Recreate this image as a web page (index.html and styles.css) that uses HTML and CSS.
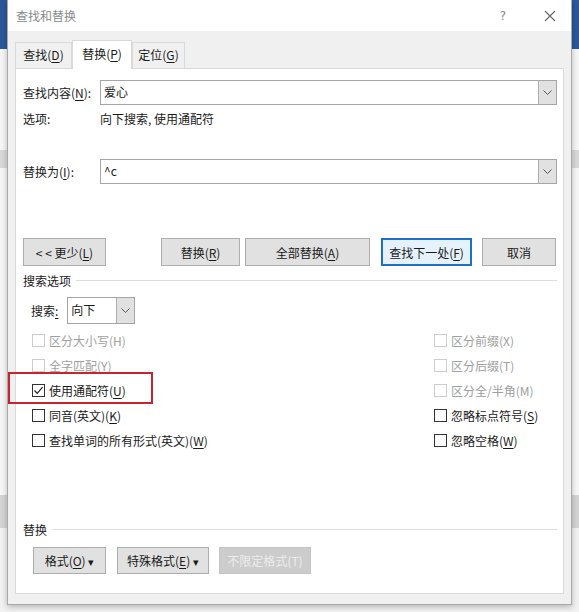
FILE: index.html
```html
<!DOCTYPE html>
<html lang="zh-CN">
<head>
  <meta charset="UTF-8" />
  <title>查找和替换</title>
  <link rel="stylesheet" href="styles.css">
</head>
<body>
  <div class="dialog">
    <div class="titlebar">
      <span class="title">查找和替换</span>
      <span class="help">?</span>
      <svg class="close" width="12" height="12" viewBox="0 0 12 12">
        <path d="M1 1L11 11M11 1L1 11" stroke="#666" stroke-width="1.1" fill="none"/>
      </svg>
    </div>

    <div class="tabs">
      <div class="tab t-find">查找(<u>D</u>)</div>
      <div class="tab t-replace active">替换(<u>P</u>)</div>
      <div class="tab t-goto">定位(<u>G</u>)</div>
    </div>

    <div class="panel">
      <div class="field first">
        <span class="label">查找内容(<u>N</u>):</span>
        <div class="combo"><span class="value">爱心</span><span class="arrow"><svg width="9" height="5" viewBox="0 0 9 5"><path d="M0.5 0.5L4.5 4.5L8.5 0.5" stroke="#555" fill="none"/></svg></span></div>
      </div>
      <div class="field options">
        <span class="label">选项:</span>
        <span>向下搜索, 使用通配符</span>
      </div>
      <div class="field second">
        <span class="label">替换为(<u>I</u>):</span>
        <div class="combo"><span class="value">^c</span><span class="arrow"><svg width="9" height="5" viewBox="0 0 9 5"><path d="M0.5 0.5L4.5 4.5L8.5 0.5" stroke="#555" fill="none"/></svg></span></div>
      </div>

      <div class="actions">
        <button class="btn b-less">&lt; &lt; 更少(<u>L</u>)</button>
        <div class="action-group">
          <button class="btn b-replace">替换(<u>R</u>)</button>
          <button class="btn b-all">全部替换(<u>A</u>)</button>
          <button class="btn b-next default">查找下一处(<u>F</u>)</button>
          <button class="btn b-cancel">取消</button>
        </div>
      </div>

      <div class="section">
        <span>搜索选项</span>
        <span class="rule"></span>
      </div>

      <div class="search-row">
        <span>搜索<u>:</u></span>
        <div class="combo small"><span class="value">向下</span><span class="arrow"><svg width="9" height="5" viewBox="0 0 9 5"><path d="M0.5 0.5L4.5 4.5L8.5 0.5" stroke="#555" fill="none"/></svg></span></div>
      </div>

      <div class="checks">
        <label class="check disabled"><span class="box"></span><span>区分大小写(H)</span></label>
        <label class="check disabled"><span class="box"></span><span>区分前缀(X)</span></label>
        <label class="check disabled"><span class="box"></span><span>全字匹配(Y)</span></label>
        <label class="check disabled"><span class="box"></span><span>区分后缀(T)</span></label>
        <label class="check"><span class="box"><svg width="11" height="11" viewBox="0 0 11 11"><path d="M1.5 5.5L4.2 8.3L9.6 2.2" stroke="#222" stroke-width="1.2" fill="none"/></svg></span><span>使用通配符(<u>U</u>)</span></label>
        <label class="check disabled"><span class="box"></span><span>区分全/半角(M)</span></label>
        <label class="check"><span class="box"></span><span>同音(英文)(<u>K</u>)</span></label>
        <label class="check"><span class="box"></span><span>忽略标点符号(<u>S</u>)</span></label>
        <label class="check"><span class="box"></span><span>查找单词的所有形式(英文)(<u>W</u>)</span></label>
        <label class="check"><span class="box"></span><span>忽略空格(<u>W</u>)</span></label>
      </div>

      <div class="section lower">
        <span>替换</span>
        <span class="rule"></span>
      </div>

      <div class="format-row">
        <button class="btn b-format">格式(<u>O</u>) <span class="caret">▾</span></button>
        <button class="btn b-special">特殊格式(<u>E</u>) <span class="caret">▾</span></button>
        <button class="btn b-noformat" disabled>不限定格式(T)</button>
      </div>
    </div>

    <div class="highlight"></div>
  </div>
</body>
</html>
```

FILE: styles.css
```css
body {
  margin: 0;
  height: 612px;
  overflow: hidden;
  font-family: "Noto Sans CJK SC", "Noto Sans", sans-serif;
  font-size: 12px;
  color: #1a1a1a;
  background: linear-gradient(#2b579a 0 49px, #f6f6f6 49px 150px, #d9d9d9 150px 168px, #f7f7f7 168px 495px, #d4d4d4 495px 528px, #f2f2f2 528px);
}
u { text-decoration: underline; text-underline-offset: 2px; }

.dialog {
  position: relative;
  box-sizing: border-box;
  width: 565px;
  height: 605px;
  margin-left: 7px;
  background: #f0f0f0;
  border: 1px solid #a9a9a9;
  border-top: none;
  box-shadow: 0 2px 6px rgba(0, 0, 0, 0.25);
  display: flex;
  flex-direction: column;
}

.titlebar {
  height: 31px;
  background: white;
  display: flex;
  align-items: center;
  padding-left: 8px;
}
.title { color: #8a8a8a; font-size: 12px; flex: 1; }
.help { color: #888; font-family: "DejaVu Sans", sans-serif; font-size: 12px; margin-right: 38px; }
.close { margin-right: 15px; }

.tabs {
  height: 37px;
  display: flex;
  align-items: flex-end;
  padding-left: 7px;
  position: relative;
  z-index: 1;
}
.tab {
  box-sizing: border-box;
  height: 26px;
  line-height: 24px;
  text-align: center;
  background: #f0f0f0;
  border: 1px solid #d9d9d9;
  border-bottom: none;
}
.t-find { width: 57px; }
.t-replace { width: 60px; }
.t-goto { width: 53px; }
.tab.active {
  height: 29px;
  line-height: 26px;
  background: white;
  margin-bottom: -1px;
  border-left: none;
  border-right: none;
  box-shadow: inset 1px 0 #d9d9d9, inset -1px 0 #d9d9d9;
}

.panel {
  box-sizing: border-box;
  height: 526px;
  margin: 0 7px;
  background: white;
  border: 1px solid #d9d9d9;
  padding: 0 6px 0 7px;
  display: flex;
  flex-direction: column;
}

.field {
  display: flex;
  align-items: center;
}
.field .label { width: 77px; flex: none; }
.field.first { margin-top: 11px; height: 25px; }
.field.options { margin-top: 3px; height: 20px; }
.field.second { margin-top: 31px; height: 25px; }

.combo {
  box-sizing: border-box;
  flex: 1;
  height: 25px;
  display: flex;
  border: 1px solid #a6a6a6;
  background: white;
}
.combo .value { flex: 1; padding-left: 3px; line-height: 21px; }
.combo .arrow {
  width: 17px;
  background: #e1e1e1;
  border-left: 1px solid #adadad;
  display: flex;
  align-items: center;
  justify-content: center;
}
.combo.small { flex: none; width: 68px; height: 27px; margin-left: 9px; }
.combo.small .value { line-height: 24px; }

.btn {
  box-sizing: border-box;
  height: 28px;
  padding: 0;
  font: inherit;
  color: #1a1a1a;
  background: #e1e1e1;
  border: 1px solid #adadad;
}
.btn.default { border: 2px solid #1f6fc5; background: #e5f1fb; }

.actions {
  margin-top: 54px;
  display: flex;
  justify-content: space-between;
  padding-right: 1px;
}
.b-less { width: 83px; }
.action-group { display: flex; }
.b-replace { width: 79px; }
.b-all { width: 125px; margin-left: 5px; }
.b-next { width: 91px; margin-left: 11px; }
.b-cancel { width: 74px; margin-left: 10px; }

.section {
  margin-top: 5px;
  height: 18px;
  display: flex;
  align-items: center;
}
.section .rule { flex: 1; border-top: 1px solid #dcdcdc; margin-left: 5px; }
.section.lower { margin-top: auto; }

.search-row {
  margin-top: 8px;
  padding-left: 8px;
  display: flex;
  align-items: center;
}

.checks {
  margin-top: 4px;
  padding-left: 9px;
  display: grid;
  grid-template-columns: 402px 1fr;
  grid-auto-rows: 25px;
}
.check {
  display: flex;
  align-items: center;
  gap: 4px;
}
.box {
  box-sizing: border-box;
  width: 13px;
  height: 13px;
  border: 1px solid #333;
  background: white;
  display: flex;
  align-items: center;
  justify-content: center;
}
.check.disabled { color: #a0a0a0; }
.check.disabled .box { border-color: #cccccc; }

.format-row {
  margin-top: 9px;
  margin-bottom: 19px;
  padding-left: 10px;
  display: flex;
  gap: 11px;
}
.format-row .btn { height: 27px; }
.b-format { width: 73px; }
.b-special { width: 92px; }
.b-noformat { width: 92px; margin-left: -1px; background: #cccccc; border-color: #c4c4c4; color: #ececec; }
.caret { font-size: 11px; }

.highlight {
  position: absolute;
  left: 0;
  top: 372px;
  width: 145px;
  height: 32px;
  box-sizing: border-box;
  border: 2px solid #c8242f;
}
```
